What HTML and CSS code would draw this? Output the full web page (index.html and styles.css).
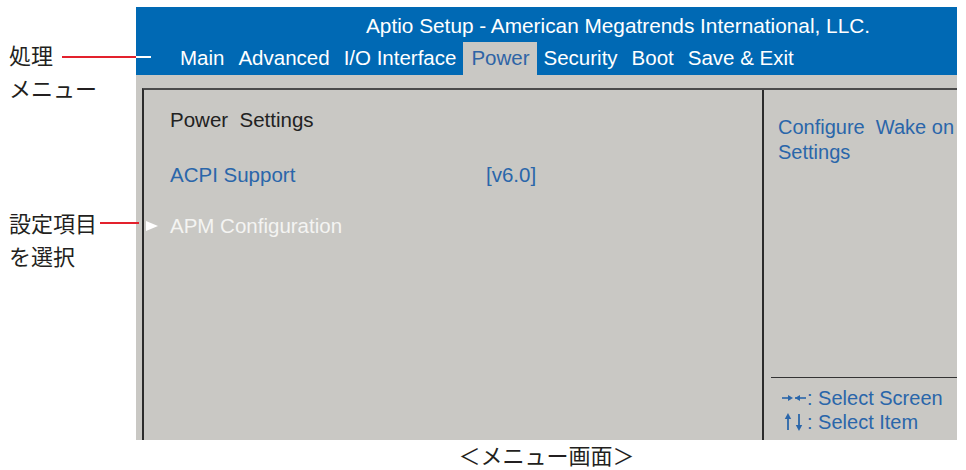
FILE: index.html
```html
<!DOCTYPE html>
<html lang="ja">
<head>
<meta charset="utf-8">
<title>Aptio Setup - Power</title>
<link rel="stylesheet" href="styles.css">
</head>
<body>
<div class="page">
  <div class="row">
    <aside class="notes">
      <div class="note note-menu">処理<br>メニュー<span class="pointer pointer-menu"></span></div>
      <div class="note note-item">設定項目<br>を選択<span class="pointer pointer-item"></span></div>
    </aside>
    <div class="screen">
      <div class="title">Aptio Setup - American Megatrends International, LLC.</div>
      <nav class="menu">
        <span class="tab">Main</span>
        <span class="tab">Advanced</span>
        <span class="tab">I/O Interface</span>
        <span class="tab tab-active">Power</span>
        <span class="tab">Security</span>
        <span class="tab">Boot</span>
        <span class="tab">Save &amp; Exit</span>
      </nav>
      <div class="body">
        <div class="box">
          <div class="main">
            <div class="item item-head"><span class="marker"></span><span>Power&nbsp; Settings</span></div>
            <div class="item item-acpi"><span class="marker"></span><span class="label">ACPI Support</span><span class="value">[v6.0]</span></div>
            <div class="item item-apm"><span class="marker"><span class="tri"></span></span><span>APM Configuration</span></div>
          </div>
          <div class="help">
            <div class="help-text">
              <div>Configure&nbsp; Wake on</div>
              <div>Settings</div>
            </div>
            <div class="keys">
              <div class="key"><svg class="arrows" width="24" height="12" viewBox="0 0 24 12"><path d="M0 6H9" stroke="#2a66aa" stroke-width="1.6"/><path d="M11 6L6 3V9Z" fill="#2a66aa"/><path d="M13 6H24" stroke="#2a66aa" stroke-width="1.6"/><path d="M13 6L18 3V9Z" fill="#2a66aa"/></svg>: Select Screen</div>
              <div class="key"><svg class="arrows" width="24" height="18" viewBox="0 0 24 18"><path d="M6 5V17" stroke="#2a66aa" stroke-width="1.8"/><path d="M6 0L2.8 6H9.2Z" fill="#2a66aa"/><path d="M17 1V13" stroke="#2a66aa" stroke-width="1.8"/><path d="M17 18L13.8 12H20.2Z" fill="#2a66aa"/></svg>: Select Item</div>
            </div>
          </div>
        </div>
      </div>
    </div>
  </div>
  <div class="caption">＜メニュー画面＞</div>
</div>
</body>
</html>
```
FILE: styles.css
```css
html, body {
  margin: 0;
  padding: 0;
  background: #ffffff;
}

.page {
  width: 966px;
  height: 470px;
  overflow: hidden;
  font-family: "Liberation Sans", Arial, "Noto Sans CJK JP", sans-serif;
}

.row {
  display: flex;
  align-items: flex-start;
}

/* left annotations */
.notes {
  flex: 0 0 136px;
  padding-top: 38px;
  display: flex;
  flex-direction: column;
}

.note {
  position: relative;
  z-index: 2;
  padding-left: 9px;
  font-family: "Noto Sans CJK JP", sans-serif;
  font-size: 22px;
  line-height: 33px;
  color: #231f20;
}

.note-item {
  margin-top: 102px;
}

.pointer {
  position: absolute;
  height: 2px;
  background: #e3212d;
}

.pointer-menu {
  left: 62px;
  top: 18px;
  width: 74px;
}

.pointer-menu::after {
  content: "";
  position: absolute;
  left: 74px;
  top: 0;
  width: 15px;
  height: 2px;
  background: #ffffff;
}

.pointer-item {
  left: 100px;
  top: 16px;
  width: 39px;
}

/* BIOS screen */
.screen {
  flex: 0 0 821px;
  margin-top: 7px;
  height: 433px;
  overflow: hidden;
  background: #c9c8c4;
}

.title {
  box-sizing: border-box;
  height: 35px;
  padding: 3px 0 0 230px;
  background: #0069b4;
  color: #ffffff;
  font-size: 20.8px;
  line-height: 32px;
  white-space: nowrap;
}

.menu {
  display: flex;
  height: 33px;
  padding-left: 37px;
  background: #0069b4;
  font-size: 20.5px;
  line-height: 31px;
  white-space: nowrap;
}

.tab {
  padding: 0 7px;
  color: #ffffff;
}

.tab-active {
  padding: 0 7px 0 8px;
  background: #c9c8c4;
  color: #2e64a6;
}

.body {
  padding: 13px 0 0 6px;
}

.box {
  display: flex;
  height: 352px;
  border-top: 2px solid #4b4b4b;
  border-left: 2px solid #2b2b2b;
}

.main {
  flex: 0 0 618px;
  padding-top: 17px;
  font-size: 20.5px;
  line-height: 26px;
}

.item {
  display: flex;
  padding-left: 2px;
  white-space: nowrap;
}

.item-head {
  color: #222222;
}

.item-acpi {
  margin-top: 29px;
  color: #2a66aa;
}

.item-apm {
  margin-top: 25px;
  color: #f4f4f2;
}

.marker {
  flex: 0 0 24px;
  display: flex;
  align-items: center;
}

.tri {
  width: 0;
  height: 0;
  border-left: 12px solid #ffffff;
  border-top: 5.5px solid transparent;
  border-bottom: 5.5px solid transparent;
}

.label {
  flex: 0 0 316px;
}

.help {
  flex: 1;
  min-width: 0;
  overflow: hidden;
  border-left: 2px solid #2b2b2b;
  display: flex;
  flex-direction: column;
  color: #2a66aa;
  font-size: 20px;
  white-space: nowrap;
}

.help-text {
  padding: 25px 0 0 14px;
  line-height: 24.5px;
}

.keys {
  margin: 213px 0 0 7px;
  padding: 8px 0 0 11px;
  border-top: 1.5px solid #333333;
  line-height: 24px;
}

.key {
  display: flex;
  align-items: center;
}

.arrows {
  margin-right: 1px;
}

.caption {
  padding: 2px 0 0 136px;
  width: 821px;
  text-align: center;
  font-family: "Noto Sans CJK JP", sans-serif;
  font-size: 22px;
  line-height: 24px;
  color: #231f20;
}
```
